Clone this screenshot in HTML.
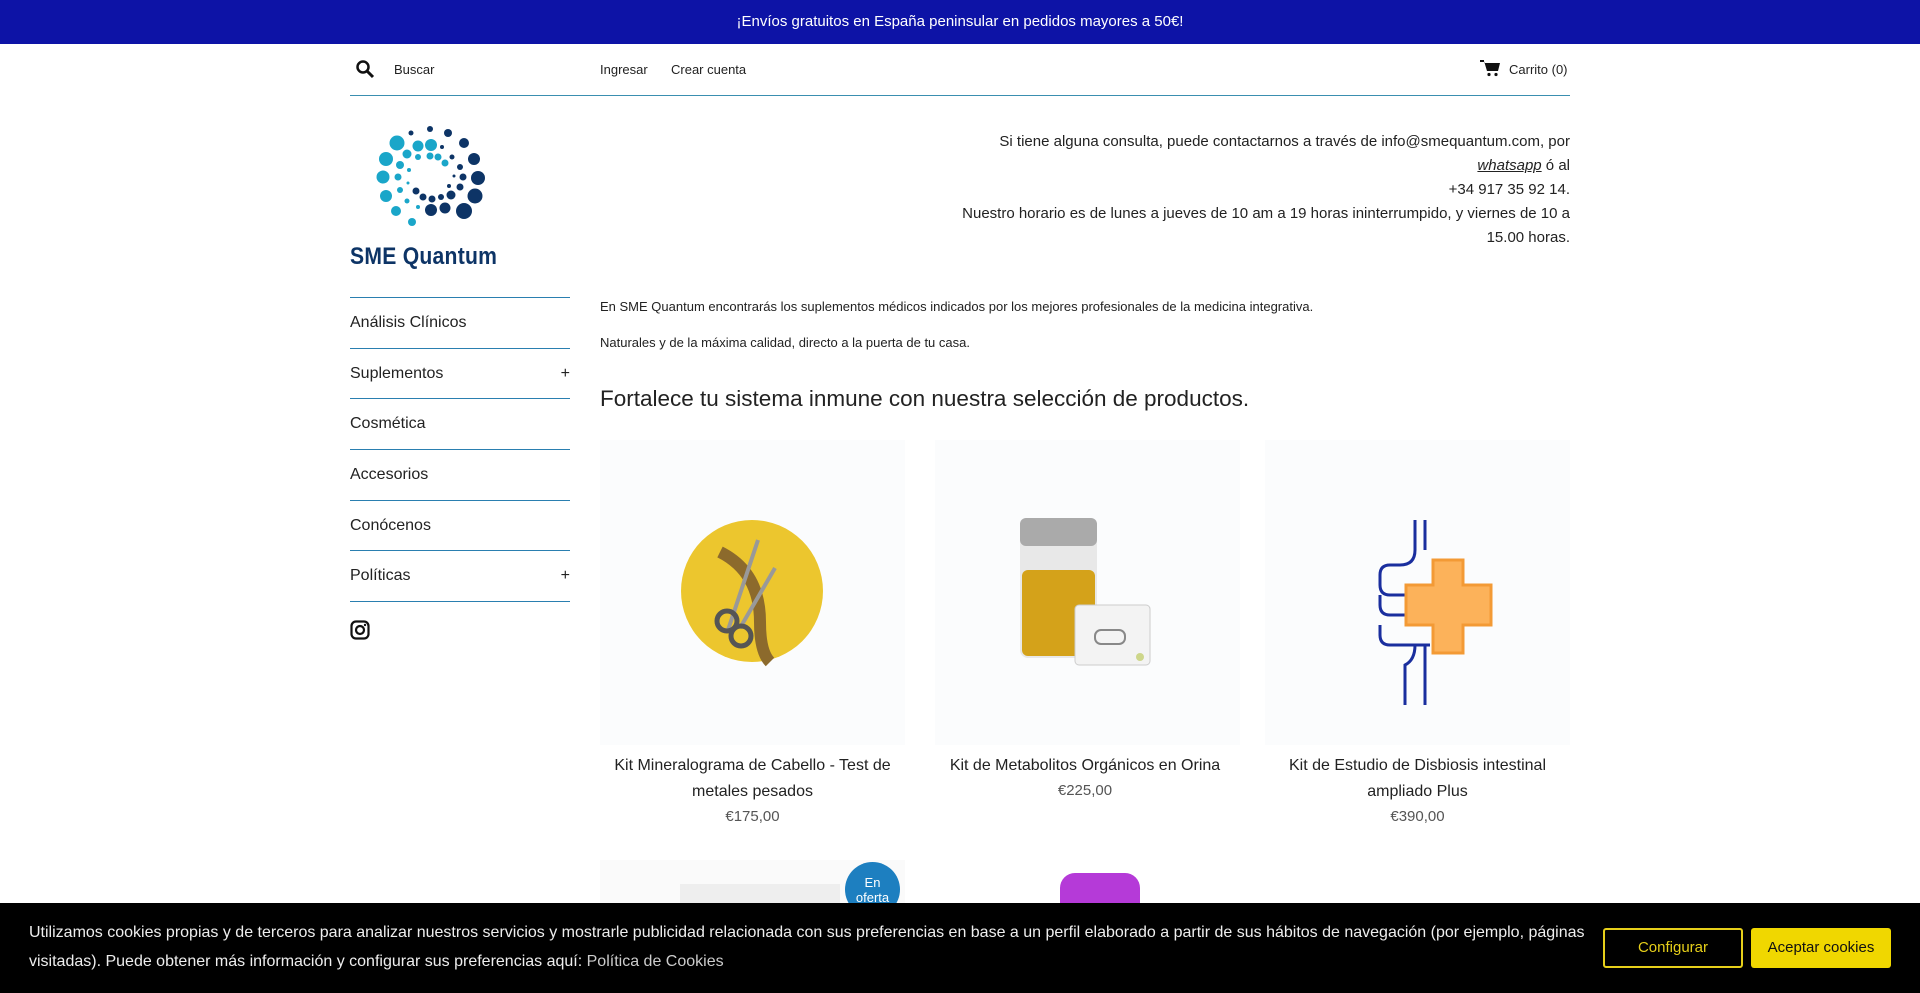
<!DOCTYPE html>
<html><head><meta charset="utf-8"><style>
*{margin:0;padding:0;box-sizing:border-box}
body{width:1920px;height:993px;overflow:hidden;background:#fff;font-family:"Liberation Sans",sans-serif;color:#222;position:relative}
.a{position:absolute}
.top{left:0;top:0;width:1920px;height:44px;background:#0d13a6;color:#fff;font-size:15px;text-align:center;line-height:43px}
.hr{height:1px;background:#3a8fb0}
.nav{left:350px;width:220px}
.nav div{height:50.7px;border-bottom:1px solid #2a7fb0;font-size:16px;line-height:50px;color:#222;position:relative}
.nav span{position:absolute;right:0;top:0}
.small{font-size:13px}
.card{width:305px;height:305px;background:#fbfcfd}
.t{font-size:16px;text-align:center;line-height:26px;color:#222}
.p{font-size:15px;color:#555;text-align:center}
</style></head><body>
<div class="a top">¡Envíos gratuitos en España peninsular en pedidos mayores a 50€!</div>
<svg class="a" style="left:355px;top:59px" width="20" height="20" viewBox="0 0 20 20"><circle cx="8" cy="8" r="5.5" fill="none" stroke="#111" stroke-width="2.5"/><path d="M12 12l6 6" stroke="#111" stroke-width="3"/></svg>
<div class="a small" style="left:394px;top:62px">Buscar</div>
<div class="a small" style="left:600px;top:62px">Ingresar</div>
<div class="a small" style="left:671px;top:62px">Crear cuenta</div>
<svg class="a" style="left:1480px;top:60px" width="20" height="17" viewBox="0 0 20 17"><path d="M4 1l3 10h11l2-8H5z" fill="#111"/><path d="M0 1h4" stroke="#111" stroke-width="2"/><circle cx="9" cy="14.5" r="1.6" fill="#111"/><circle cx="16" cy="14.5" r="1.6" fill="#111"/></svg>
<div class="a small" style="left:1509px;top:62px">Carrito (0)</div>
<div class="a hr" style="left:350px;top:95px;width:1220px"></div>
<svg class="a" style="left:340px;top:120px" width="160" height="110" viewBox="340 120 160 110">
<g fill="#1aa6c9"><circle cx="397" cy="143" r="7.5"/><circle cx="386" cy="159" r="7"/><circle cx="383" cy="177" r="6.5"/><circle cx="386" cy="196" r="6"/><circle cx="396" cy="211" r="5"/><circle cx="412" cy="222" r="4"/><circle cx="418" cy="146" r="5.5"/><circle cx="431" cy="145" r="6"/><circle cx="407" cy="154" r="4.5"/><circle cx="400" cy="165" r="4"/><circle cx="398" cy="177" r="3.5"/><circle cx="400" cy="190" r="3"/><circle cx="407" cy="201" r="2.5"/><circle cx="418" cy="157" r="3"/><circle cx="430" cy="156" r="3.5"/><circle cx="438" cy="157" r="3.5"/><circle cx="445" cy="163" r="3.5"/><circle cx="409" cy="170" r="2"/><circle cx="408" cy="183" r="1.5"/><circle cx="418" cy="207" r="2"/></g>
<g fill="#0d3466"><circle cx="411" cy="133" r="2.5"/><circle cx="430" cy="129" r="3"/><circle cx="448" cy="133" r="4"/><circle cx="464" cy="143" r="5"/><circle cx="474" cy="159" r="6"/><circle cx="478" cy="178" r="7"/><circle cx="475" cy="196" r="7.5"/><circle cx="464" cy="211" r="8"/><circle cx="445" cy="208" r="5.5"/><circle cx="431" cy="210" r="6"/><circle cx="451" cy="195" r="4.5"/><circle cx="460" cy="187" r="3.5"/><circle cx="463" cy="177" r="3.5"/><circle cx="460" cy="167" r="3"/><circle cx="452" cy="157" r="2.5"/><circle cx="442" cy="147" r="2"/><circle cx="416" cy="191" r="3.5"/><circle cx="423" cy="197" r="3.5"/><circle cx="432" cy="199" r="3.5"/><circle cx="441" cy="197" r="3"/><circle cx="449" cy="186" r="2"/><circle cx="454" cy="176" r="1.5"/></g></svg>
<div class="a" style="left:350px;top:243px;font-size:24px;color:#0d3466;letter-spacing:0.3px;font-weight:bold;transform:scaleX(0.88);transform-origin:left">SME Quantum</div>
<div class="a" style="left:900px;top:130px;width:670px;text-align:right;font-size:15px;line-height:24px;color:#222">Si tiene alguna consulta, puede contactarnos a través de info@smequantum.com, por<br><i style="text-decoration:underline">whatsapp</i> ó al<br>+34 917 35 92 14.<br>Nuestro horario es de lunes a jueves de 10 am a 19 horas ininterrumpido, y viernes de 10 a<br>15.00 horas.</div>
<div class="a hr" style="left:350px;top:297px;width:220px;background:#2a7fb0"></div>
<div class="a nav" style="top:298px">
<div>Análisis Clínicos</div><div>Suplementos<span>+</span></div><div>Cosmética</div><div>Accesorios</div><div>Conócenos</div><div>Políticas<span>+</span></div></div>
<svg class="a" style="left:350px;top:620px" width="20" height="20" viewBox="0 0 20 20"><rect x="1.5" y="1.5" width="17" height="17" rx="4.5" fill="none" stroke="#111" stroke-width="2.2"/><circle cx="10" cy="10" r="4" fill="none" stroke="#111" stroke-width="2.2"/><circle cx="15" cy="5" r="1.2" fill="#111"/></svg>
<div class="a small" style="left:600px;top:299px">En SME Quantum encontrarás los suplementos médicos indicados por los mejores profesionales de la medicina integrativa.</div>
<div class="a small" style="left:600px;top:335px">Naturales y de la máxima calidad, directo a la puerta de tu casa.</div>
<div class="a" style="left:600px;top:386px;font-size:22.5px;color:#222">Fortalece tu sistema inmune con nuestra selección de productos.</div>
<div class="a card" style="left:600px;top:440px"><svg width="305" height="305"><ellipse cx="152" cy="151" rx="71" ry="71" fill="#ecc62e"/><path d="M120 112q40 20 40 70q0 30 10 40" stroke="#8c6a2c" stroke-width="12" fill="none"/><path d="M158 100l-30 90M175 128l-35 60" stroke="#999" stroke-width="4"/><circle cx="127" cy="181" r="10" fill="none" stroke="#555" stroke-width="5"/><circle cx="141" cy="196" r="10" fill="none" stroke="#555" stroke-width="5"/></svg></div>
<div class="a card" style="left:935px;top:440px"><svg width="305" height="305"><rect x="85" y="78" width="77" height="140" rx="8" fill="#e8e8e8"/><rect x="85" y="78" width="77" height="28" rx="6" fill="#aaa"/><rect x="87" y="130" width="73" height="86" rx="6" fill="#d4a21a"/><rect x="140" y="165" width="75" height="60" rx="4" fill="#f3f3f3" stroke="#ccc"/><rect x="160" y="190" width="30" height="14" rx="6" fill="none" stroke="#888" stroke-width="2"/><circle cx="205" cy="217" r="4" fill="#cdd68a"/></svg></div>
<div class="a card" style="left:1265px;top:440px"><svg width="305" height="305"><path d="M150 80v30q0 15-15 15h-10q-10 0-10 10v10q0 10 10 10h40M115 155v10q0 10 10 10h40M115 185v10q0 10 10 10h40M160 80v30M150 205q0 15-10 20v40M160 205v60" stroke="#1a2e9e" stroke-width="3" fill="none"/><path d="M168 120h30v25h28v40h-28v28h-30v-28h-27v-40h27z" fill="#fcb25a" stroke="#f39a35" stroke-width="3"/></svg></div>
<div class="a t" style="left:600px;top:753px;width:305px">Kit Mineralograma de Cabello - Test de metales pesados</div>
<div class="a p" style="left:600px;top:808px;width:305px">€175,00</div>
<div class="a t" style="left:935px;top:753px;width:300px">Kit de Metabolitos Orgánicos en Orina</div>
<div class="a p" style="left:935px;top:782px;width:300px">€225,00</div>
<div class="a t" style="left:1265px;top:753px;width:305px">Kit de Estudio de Disbiosis intestinal ampliado Plus</div>
<div class="a p" style="left:1265px;top:808px;width:305px">€390,00</div>
<div class="a" style="left:600px;top:860px;width:305px;height:50px;background:#fafafa"></div>
<div class="a" style="left:680px;top:884px;width:160px;height:30px;background:#eee"></div>
<div class="a" style="left:845px;top:862px;width:55px;height:55px;border-radius:50%;background:#1d7fc0;color:#fff;font-size:13px;text-align:center;line-height:15px;padding-top:13px">En<br>oferta</div>
<div class="a" style="left:1060px;top:873px;width:80px;height:30px;border-radius:15px 15px 0 0;background:#b53ad8"></div>
<div class="a" style="left:0;top:903px;width:1920px;height:90px;background:#000"></div>
<div class="a" style="left:29px;top:918px;width:1565px;color:#eee;font-size:16px;line-height:29px">Utilizamos cookies propias y de terceros para analizar nuestros servicios y mostrarle publicidad relacionada con sus preferencias en base a un perfil elaborado a partir de sus hábitos de navegación (por ejemplo, páginas visitadas). Puede obtener más información y configurar sus preferencias aquí: <span style="color:#ccc">Política de Cookies</span></div>
<div class="a" style="left:1603px;top:928px;width:140px;height:40px;border:2px solid #e6cf1a;border-radius:3px;color:#e6cf1a;font-size:15px;text-align:center;line-height:36px">Configurar</div>
<div class="a" style="left:1751px;top:928px;width:140px;height:40px;background:#f0d700;border-radius:3px;color:#111;font-size:15px;text-align:center;line-height:40px">Aceptar cookies</div>
</body></html>
